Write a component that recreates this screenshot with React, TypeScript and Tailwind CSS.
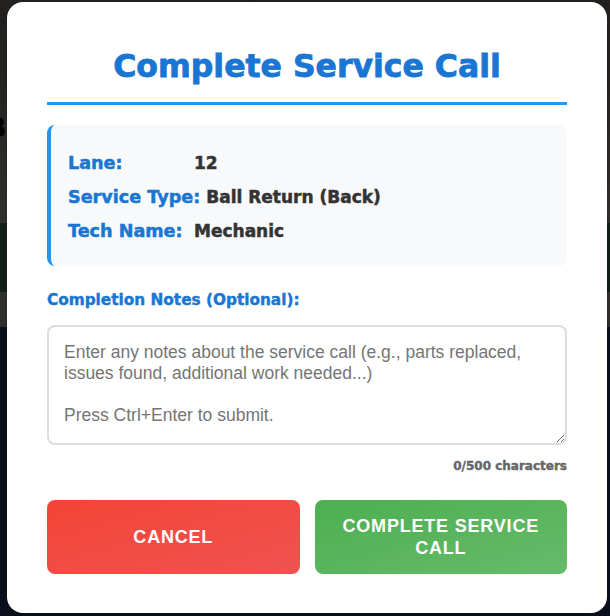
import { useState } from 'react';

const heading = "font-['DejaVu_Sans',sans-serif] font-bold";
const body = "font-['Liberation_Sans',Arial,sans-serif]";

function InfoRow({ label, value }: { label: string; value: string }) {
  return (
    <div className="flex leading-[24px] [-webkit-text-stroke:0.5px_currentColor]">
      <span className={`${heading} min-w-[120px] mr-[6px] text-[17.6px] text-[#1976d2]`}>{label}</span>
      <span className={`${heading} text-[17px] text-[#333]`}>{value}</span>
    </div>
  );
}

export default function App() {
  const [notes, setNotes] = useState('');

  return (
    <div className={`relative h-[616px] w-[610px] overflow-hidden ${body}`}>
      {/* Lane board behind the dialog, dimmed */}
      <div className="flex h-full flex-col">
        <div className="h-[223px] bg-linear-to-b from-[#262422] to-[#3b3936] pt-[113px]">
          <span className={`${heading} -ml-[14px] block text-[27px] leading-[30px] text-black`}>B</span>
        </div>
        <div className="h-[69px] bg-[#15251a]" />
        <div className="h-[35px] bg-[#3a3835]" />
        <div className="flex-1 bg-[#0c1221]" />
      </div>

      {/* Modal */}
      <div className="absolute inset-0 pl-[7px] pt-[2px]">
        <div className="w-[600px] rounded-[16px] bg-white px-[40px] pt-[46px] pb-[39px] shadow-[0_10px_40px_rgba(0,0,0,0.4)]">
          <h2
            className={`${heading} border-b-[3px] border-[#2196f3] pb-[17px] text-center text-[31.5px] leading-[37px] text-[#1976d2] [-webkit-text-stroke:0.8px_currentColor]`}
          >
            Complete Service Call
          </h2>

          <div className="mt-[20px] flex flex-col gap-[10px] rounded-[8px] border-l-4 border-[#2196f3] bg-[#f8f9fa] pt-[26px] pb-[23px] pl-[17px]">
            <InfoRow label="Lane:" value="12" />
            <InfoRow label="Service Type:" value="Ball Return (Back)" />
            <InfoRow label="Tech Name:" value="Mechanic" />
          </div>

          <label
            className={`${heading} mt-[24px] mb-[15px] block text-[15.3px] leading-[20px] text-[#1976d2] [-webkit-text-stroke:0.4px_currentColor]`}
          >
            Completion Notes (Optional):
          </label>
          <textarea
            value={notes}
            onChange={(e) => setNotes(e.target.value.slice(0, 500))}
            placeholder={
              'Enter any notes about the service call (e.g., parts replaced, issues found, additional work needed...)\n\nPress Ctrl+Enter to submit.'
            }
            className={`${body} block h-[120px] w-full rounded-[8px] border-2 border-[#ddd] p-[15px] text-[17.5px] leading-[21px] text-[#333] outline-none placeholder:text-[#757575]`}
          />
          <div
            className={`${heading} mt-[13px] text-right text-[12px] leading-[16px] text-[#666] [-webkit-text-stroke:0.4px_currentColor]`}
          >
            {notes.length}/500 characters
          </div>

          <div className="mt-[26px] grid grid-cols-2 gap-[15px]">
            <button className="flex items-center justify-center rounded-[8px] bg-linear-to-br from-[#f44336] to-[#ef5350] px-[20px] py-[15px] text-[18px] leading-[22px] font-bold tracking-[0.8px] text-white uppercase">
              Cancel
            </button>
            <button className="flex items-center justify-center rounded-[8px] bg-linear-to-br from-[#4caf50] to-[#66bb6a] px-[20px] py-[15px] text-[18px] leading-[22px] font-bold tracking-[0.8px] text-white uppercase">
              Complete Service Call
            </button>
          </div>
        </div>
      </div>
    </div>
  );
}
